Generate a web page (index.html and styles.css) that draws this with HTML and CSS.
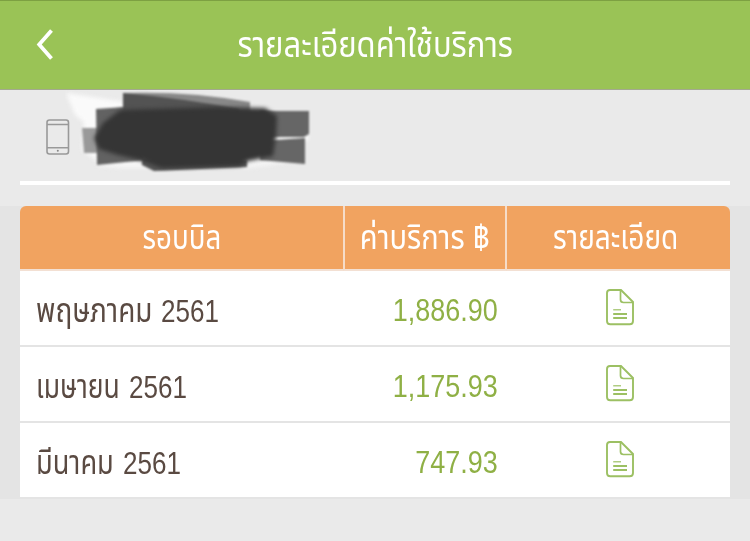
FILE: index.html
```
<!DOCTYPE html>
<html lang="th">
<head>
<meta charset="UTF-8">
<title>รายละเอียดค่าใช้บริการ</title>
<link rel="stylesheet" href="styles.css">
</head>
<body>

<svg class="defs" width="0" height="0">
	<symbol id="doc" viewBox="0 0 30 38">
		<path d="M5 2H16L28 14V33Q28 36.300 24.700 36.300H5.300Q2 36.300 2 33V5Q2 2 5 2Z" fill="none" stroke="#9cc063" stroke-width="1.900"/>
		<path d="M15.500 2V11.500Q15.500 14.500 18.500 14.500H28" fill="none" stroke="#9cc063" stroke-width="1.700"/>
		<path d="M8.200 21.800H16" stroke="#9cc063" stroke-width="1.200"/>
		<path d="M8.200 26H22M8.200 30H22" stroke="#9cc063" stroke-width="2"/>
	</symbol>
</svg>

<div class="header">
	<svg class="back" width="20" height="34" viewBox="0 0 20 34"><path d="M16.500 2.500L4.200 16.500L16.500 30.500" fill="none" stroke="#fff" stroke-width="3.800"/></svg>
	<h1 class="title"><span class="title-text">รายละเอียดค่าใช้บริการ</span></h1>
</div>

<div class="number">
	<svg class="phone" width="24" height="36" viewBox="0 0 24 36" fill="none" stroke="#999" stroke-width="1.600">
		<rect x="1" y="1" width="21.500" height="34" rx="2.500"/>
		<path d="M1 5.500H22.500M1 28.700H22.500"/>
		<circle cx="11.800" cy="31.700" r="1" fill="#888" stroke="none"/>
	</svg>
	<svg class="hidden-number" width="250" height="86" viewBox="65 90 250 86">
		<g class="smudge">
			<path d="M66 93L125 102L115 166L99 162L82 150L84 122L75 115Z" fill="#fafafa"/>
			<path d="M96 160H303L250 168H120L98 166Z" fill="#f5f5f5"/>
			<path d="M275 136L308 133V140L275 142Z" fill="#fff"/>
		</g>
		<g class="stroke">
			<path d="M82 128H110V153H84Z" fill="#999"/>
			<path d="M96 109L125 107L145 160L97 165Z" fill="#626262"/>
			<path d="M123 93Q190 91 250 102V115H123Z" fill="#888"/>
			<path d="M123 93Q180 98 239 109V116H123Z" fill="#535353"/>
			<path d="M260 111H309V134L304 137L265 137Z" fill="#666"/>
			<path d="M260 141L305 138V164L260 160Z" fill="#666"/>
			<path d="M142 158L247 160V167L154 171L142 165Z" fill="#555"/>
		</g>
		<path class="core" d="M120 110L218 107L265 108L277 116L276 137L273 156L248 161L240 166L162 168L140 160L118 155L99 149L94 138L103 123Z" fill="#353535"/>
	</svg>
</div>

<div class="content">
	<table class="bill">
		<tr>
			<th class="col1"><span class="th-text t1">รอบบิล</span></th>
			<th class="col2"><span class="th-text t2">ค่าบริการ ฿</span></th>
			<th class="col3"><span class="th-text t3">รายละเอียด</span></th>
		</tr>
		<tr>
			<td class="month"><span class="name m1">พฤษภาคม</span><span class="year">2561</span></td>
			<td class="price"><span class="amount">1,886.90</span></td>
			<td class="detail"><svg width="30" height="38"><use href="#doc"/></svg></td>
		</tr>
		<tr>
			<td class="month"><span class="name m2">เมษายน</span><span class="year">2561</span></td>
			<td class="price"><span class="amount">1,175.93</span></td>
			<td class="detail"><svg width="30" height="38"><use href="#doc"/></svg></td>
		</tr>
		<tr>
			<td class="month"><span class="name m3">มีนาคม</span><span class="year">2561</span></td>
			<td class="price"><span class="amount">747.93</span></td>
			<td class="detail"><svg width="30" height="38"><use href="#doc"/></svg></td>
		</tr>
	</table>
</div>

</body>
</html>
```
FILE: styles.css
```
body {
	margin: 0;
	background: #eaeaea;
	font-family: "Liberation Sans", "Noto Sans Thai", "Noto Sans", sans-serif;
}

.defs {
	display: block;
}

.header {
	box-sizing: border-box;
	height: 90px;
	display: flex;
	align-items: center;
	padding: 0 33px 0 35px;
	background: #9ac356;
	border-top: 1px solid #7da042;
	border-bottom: 1px solid #a3a98f;
}

.title {
	flex: 1;
	margin: 0 22px 0 0;
	text-align: center;
	font-size: 36px;
	font-weight: 400;
	line-height: 60px;
	color: #fff;
}

.title-text, .th-text, .name, .year, .amount {
	display: inline-block;
	white-space: nowrap;
}

/* condensed letters */
.title-text {
	transform: scaleX(0.86);
}

.t1 {
	transform: scaleX(0.84);
}

.t2 {
	margin: 0 -10px;
	transform: scaleX(0.88);
}

.t3 {
	margin-left: -6px;
	transform: scaleX(0.85);
}

.number {
	box-sizing: border-box;
	height: 95px;
	margin: 0 20px;
	display: flex;
	align-items: flex-start;
	border-bottom: 4px solid #fff;
}

.phone {
	margin: 29px 0 0 26px;
}

.hidden-number {
	margin-left: -5px;
}

.smudge {
	filter: blur(2px);
}

.stroke {
	filter: blur(1.2px);
}

.core {
	filter: blur(2px);
}

.content {
	margin-top: 21px;
	padding: 0 20px;
	background: #e4e4e4;
}

.bill {
	width: 710px;
	table-layout: fixed;
	border-collapse: separate;
	border-spacing: 0;
}

.bill th {
	box-sizing: border-box;
	height: 65px;
	padding: 0;
	background: #f1a360;
	background-clip: padding-box;
	border-bottom: 2px solid #f3e0d3;
	color: #fff;
	font-size: 33px;
	font-weight: 400;
	line-height: 60px;
}

.bill .col1 {
	width: 323px;
	border-top-left-radius: 6px;
}

.bill .col2 {
	width: 164px;
	border-left: 2px solid #f6dcc8;
	border-right: 2px solid #f6dcc8;
}

.bill .col3 {
	border-top-right-radius: 6px;
}

.bill td {
	box-sizing: border-box;
	height: 76px;
	padding: 0;
	background: #fff;
	border-bottom: 2px solid #e4e4e4;
	font-size: 31px;
	line-height: 60px;
}

.bill .month {
	padding: 6px 0 0 16px;
	color: #5a4a42;
	white-space: nowrap;
}

.name {
	font-size: 34px;
	transform-origin: left;
}

.m1 {
	width: 125px;
	transform: scaleX(0.82);
}

.m2 {
	width: 93px;
	transform: scaleX(0.78);
}

.m3 {
	width: 87px;
	transform: scaleX(0.8);
}

.year {
	transform: scaleX(0.84);
	transform-origin: left;
}

.bill .price {
	padding: 6px 9px 0 0;
	text-align: right;
	color: #8fb045;
}

.amount {
	transform: scaleX(0.87);
	transform-origin: right;
}

.bill .detail {
	padding: 0 0 2px 3px;
	text-align: center;
}

.detail svg {
	display: block;
	margin: 0 auto;
}
```
